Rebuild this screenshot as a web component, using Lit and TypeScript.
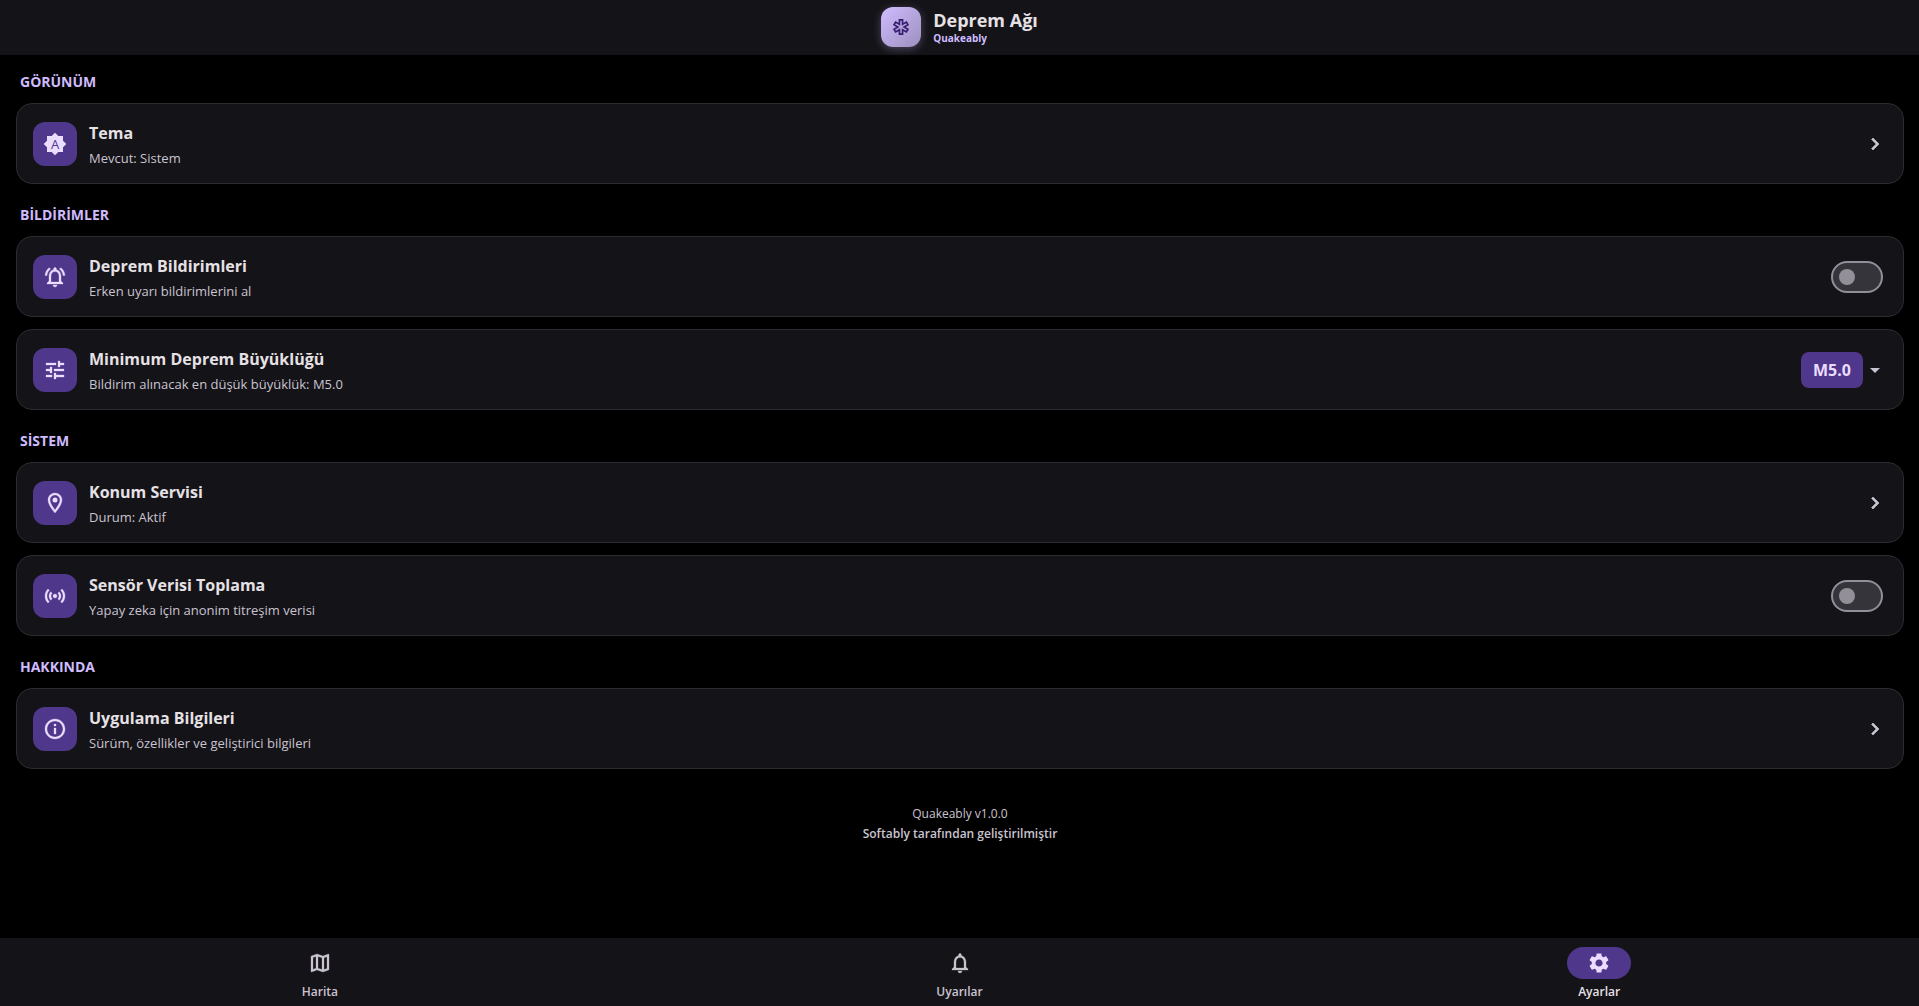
import { LitElement, html, svg, css, nothing, type SVGTemplateResult } from "lit";
import { customElement, property } from "lit/decorators.js";

const icons: Record<string, SVGTemplateResult> = {
  brightness: svg`
    <path d="M20 8.69V4h-4.69L12 .69 8.69 4H4v4.69L.69 12 4 15.31V20h4.69L12 23.31 15.31 20H20v-4.69L23.31 12z"/>
    <text class="letter" x="12" y="17" text-anchor="middle">A</text>`,
  alarm: svg`<path class="bold" d="M12 22c1.1 0 2-.9 2-2h-4c0 1.1.9 2 2 2zm6-6v-5c0-3.07-1.63-5.64-4.5-6.32V4c0-.83-.67-1.5-1.5-1.5s-1.5.67-1.5 1.5v.68C7.64 5.36 6 7.92 6 11v5l-2 2v1h16v-1l-2-2zm-2 1H8v-6c0-2.48 1.51-4.5 4-4.5s4 2.02 4 4.5v6zM7.58 4.08L6.15 2.65C3.75 4.48 2.17 7.3 2.03 10.5h2c.15-2.65 1.51-4.97 3.55-6.42zm12.39 6.42h2c-.15-3.2-1.73-6.02-4.12-7.85l-1.42 1.43c2.02 1.45 3.39 3.77 3.54 6.42z"/>`,
  tune: svg`<path class="bold" d="M3 17v2h6v-2H3zM3 5v2h10V5H3zm10 16v-2h8v-2h-8v-2h-2v6h2zM7 9v2H3v2h4v2h2V9H7zm14 4v-2H11v2h10zm-6-4h2V7h4V5h-4V3h-2v6z"/>`,
  place: svg`<path class="bold" d="M12 2C8.13 2 5 5.13 5 9c0 5.25 7 13 7 13s7-7.75 7-13c0-3.87-3.13-7-7-7zM7 9c0-2.76 2.24-5 5-5s5 2.24 5 5c0 2.88-2.88 7.19-5 9.88C9.92 16.21 7 11.85 7 9z"/><circle cx="12" cy="9" r="2.5"/>`,
  sensors: svg`<path class="bold" d="M7.76 16.24C6.67 15.16 6 13.66 6 12s.67-3.16 1.76-4.24l1.42 1.42C8.45 9.9 8 10.9 8 12c0 1.1.45 2.1 1.17 2.83l-1.41 1.41zm8.48 0C17.33 15.16 18 13.66 18 12s-.67-3.16-1.76-4.24l-1.42 1.42C15.55 9.9 16 10.9 16 12c0 1.1-.45 2.1-1.17 2.83l1.41 1.41zM12 10c-1.1 0-2 .9-2 2s.9 2 2 2 2-.9 2-2-.9-2-2-2zm8 2c0 2.21-.9 4.21-2.35 5.65l1.42 1.42C20.88 17.26 22 14.76 22 12s-1.12-5.26-2.93-7.07l-1.42 1.42C19.1 7.79 20 9.79 20 12zM6.35 6.35L4.93 4.93C3.12 6.74 2 9.24 2 12s1.12 5.26 2.93 7.07l1.42-1.42C4.9 16.21 4 14.21 4 12s.9-4.21 2.35-5.65z"/>`,
  info: svg`<path class="bold" d="M11 7h2v2h-2zm0 4h2v6h-2zm1-9C6.48 2 2 6.48 2 12s4.48 10 10 10 10-4.48 10-10S17.52 2 12 2zm0 18c-4.41 0-8-3.59-8-8s3.59-8 8-8 8 3.59 8 8-3.59 8-8 8z"/>`,
  chevron: svg`<path class="bolder" d="M10 6L8.59 7.41 13.17 12l-4.58 4.59L10 18l6-6z"/>`,
  drop: svg`<path d="M7 10l5 5 5-5z"/>`,
  map: svg`<path class="bold" d="M20.5 3l-.16.03L15 5.1 9 3 3.36 4.9c-.21.07-.36.25-.36.48V20.5c0 .28.22.5.5.5l.16-.03L9 18.9l6 2.1 5.64-1.9c.21-.07.36-.25.36-.48V3.5c0-.28-.22-.5-.5-.5zM10 5.47l4 1.4v11.66l-4-1.4V5.47zm-5 .99l3-1.01v11.7l-3 1.16V6.46zm14 11.08l-3 1.01V6.86l3-1.16v11.84z"/>`,
  bell: svg`<path class="bold" d="M12 22c1.1 0 2-.9 2-2h-4c0 1.1.9 2 2 2zm6-6v-5c0-3.07-1.63-5.64-4.5-6.32V4c0-.83-.67-1.5-1.5-1.5s-1.5.67-1.5 1.5v.68C7.64 5.36 6 7.92 6 11v5l-2 2v1h16v-1l-2-2zm-2 1H8v-6c0-2.48 1.51-4.5 4-4.5s4 2.02 4 4.5v6z"/>`,
  gear: svg`<path d="M19.14 12.94c.04-.3.06-.61.06-.94 0-.32-.02-.64-.07-.94l2.03-1.58c.18-.14.23-.41.12-.61l-1.92-3.32c-.12-.22-.37-.29-.59-.22l-2.39.96c-.5-.38-1.03-.7-1.62-.94l-.36-2.54c-.04-.24-.24-.41-.48-.41h-3.84c-.24 0-.43.17-.47.41l-.36 2.54c-.59.24-1.13.57-1.62.94l-2.39-.96c-.22-.08-.47 0-.59.22L2.74 8.87c-.12.21-.08.47.12.61l2.03 1.58c-.05.3-.09.63-.09.94s.02.64.07.94l-2.03 1.58c-.18.14-.23.41-.12.61l1.92 3.32c.12.22.37.29.59.22l2.39-.96c.5.38 1.03.7 1.62.94l.36 2.54c.05.24.24.41.48.41h3.84c.24 0 .44-.17.47-.41l.36-2.54c.59-.24 1.13-.56 1.62-.94l2.39.96c.22.08.47 0 .59-.22l1.92-3.32c.12-.22.07-.47-.12-.61l-2.01-1.58zM12 15.6c-1.98 0-3.6-1.62-3.6-3.6s1.62-3.6 3.6-3.6 3.6 1.62 3.6 3.6-1.62 3.6-3.6 3.6z"/>`,
  star: svg`<path class="outline" d="M10.3 4.2h3.4v4.86l4.2-2.43 1.7 2.94L15.4 12l4.2 2.43-1.7 2.94-4.2-2.43v4.86h-3.4v-4.86l-4.2 2.43-1.7-2.94L8.6 12 4.4 9.57l1.7-2.94 4.2 2.43z"/>`,
};

@customElement("app-icon")
export class AppIcon extends LitElement {
  @property() name = "";

  static styles = css`
    :host { display: block; width: 24px; height: 24px; flex: none; }
    svg { display: block; width: 100%; height: 100%; fill: currentColor; }
    .letter { font: 400 13px "Open Sans", "Noto Sans", sans-serif; fill: #4f378b; }
    .outline { fill: none; stroke: currentColor; stroke-width: 1.8; }
    .bold { stroke: currentColor; stroke-width: 0.3; }
    .bolder { stroke: currentColor; stroke-width: 0.7; }
  `;

  render() {
    return html`<svg viewBox="0 0 24 24" aria-hidden="true">${icons[this.name] ?? nothing}</svg>`;
  }
}

interface Row {
  id: string;
  icon: string;
  title: string;
  sub: string;
  kind: "link" | "switch" | "select";
}

const sections: { label: string; rows: Row[] }[] = [
  {
    label: "GÖRÜNÜM",
    rows: [{ id: "theme", icon: "brightness", title: "Tema", sub: "Mevcut: Sistem", kind: "link" }],
  },
  {
    label: "BİLDİRİMLER",
    rows: [
      { id: "alerts", icon: "alarm", title: "Deprem Bildirimleri", sub: "Erken uyarı bildirimlerini al", kind: "switch" },
      { id: "magnitude", icon: "tune", title: "Minimum Deprem Büyüklüğü", sub: "Bildirim alınacak en düşük büyüklük: M5.0", kind: "select" },
    ],
  },
  {
    label: "SİSTEM",
    rows: [
      { id: "location", icon: "place", title: "Konum Servisi", sub: "Durum: Aktif", kind: "link" },
      { id: "sensor", icon: "sensors", title: "Sensör Verisi Toplama", sub: "Yapay zeka için anonim titreşim verisi", kind: "switch" },
    ],
  },
  {
    label: "HAKKINDA",
    rows: [{ id: "about", icon: "info", title: "Uygulama Bilgileri", sub: "Sürüm, özellikler ve geliştirici bilgileri", kind: "link" }],
  },
];

const tabs = [
  { icon: "map", label: "Harita", active: false },
  { icon: "bell", label: "Uyarılar", active: false },
  { icon: "gear", label: "Ayarlar", active: true },
];

@customElement("app-root")
export class AppRoot extends LitElement {
  static styles = css`
    :host {
      display: flex;
      flex-direction: column;
      min-height: 100vh;
      background: #000;
      color: #e6e1e5;
      font-family: "Open Sans", "Noto Sans", sans-serif;
    }
    * { box-sizing: border-box; }
    h1, h2, p { margin: 0; }

    .header {
      display: flex;
      justify-content: center;
      align-items: center;
      gap: 12px;
      padding: 7px 16px 8px;
      background: #141318;
    }
    .logo {
      display: grid;
      place-items: center;
      width: 40px;
      height: 40px;
      border-radius: 12px;
      background: linear-gradient(135deg, #cfbcff, #9c8fbd);
      box-shadow: 0 2px 8px rgba(207, 188, 255, 0.3);
      color: #381e72;
    }
    .logo app-icon { width: 22px; height: 22px; }
    .brand { font-size: 18px; line-height: 22px; font-weight: 700; }
    .tagline { font-size: 10px; line-height: 14px; font-weight: 700; color: #cfbcff; }

    .content { flex: 1; padding: 0 15px 0 16px; }
    .section { display: flex; flex-direction: column; gap: 12px; }
    .label {
      padding: 17px 4px 0;
      font-size: 14px;
      line-height: 19px;
      font-weight: 700;
      color: #cfbcff;
    }
    .section + .section .label { padding-top: 21px; }

    .card {
      display: flex;
      align-items: center;
      gap: 12px;
      width: 100%;
      min-height: 81px;
      padding: 15px 16px;
      border: 1px solid #2c2b2f;
      border-radius: 16px;
      background: #141318;
      color: inherit;
      font: inherit;
      text-align: left;
    }
    .badge {
      display: grid;
      place-items: center;
      width: 44px;
      height: 44px;
      border-radius: 12px;
      background: #4f378b;
      color: #eaddff;
    }
    .text { flex: 1; display: flex; flex-direction: column; gap: 4px; padding-top: 2px; }
    .title { font-size: 16px; line-height: 22px; font-weight: 700; }
    .sub { font-size: 13px; line-height: 20px; color: #cac4d0; }
    .muted { color: #cac4d0; }

    .switch {
      appearance: none;
      display: flex;
      align-items: center;
      width: 52px;
      height: 32px;
      margin: 0 4px;
      padding: 0 6px;
      border: 2px solid #938f99;
      border-radius: 16px;
      background: #36343b;
    }
    .switch::before {
      content: "";
      width: 16px;
      height: 16px;
      border-radius: 50%;
      background: #938f99;
    }
    .switch:checked { justify-content: flex-end; background: #4f378b; }

    .picker { display: flex; align-items: center; color: #cac4d0; }
    .select {
      appearance: none;
      height: 36px;
      padding: 0 12px;
      border: 0;
      border-radius: 8px;
      background: #4f378b;
      color: #eaddff;
      font: 700 16px/24px "Open Sans", "Noto Sans", sans-serif;
    }

    .footer {
      padding: 35px 0;
      text-align: center;
      font-size: 12px;
      line-height: 20px;
      color: #cac4d0;
    }
    .strong { font-weight: 600; }

    .nav { display: flex; height: 68px; background: #141318; }
    .tab {
      flex: 1;
      display: flex;
      flex-direction: column;
      align-items: center;
      padding-top: 9px;
      gap: 5px;
      color: #cac4d0;
      font-size: 12px;
      line-height: 16px;
      font-weight: 600;
      text-decoration: none;
    }
    .pill {
      display: grid;
      place-items: center;
      width: 64px;
      height: 32px;
      border-radius: 16px;
    }
    .active { color: #e6e1e5; }
    .active .pill { background: #4f378b; color: #eaddff; }
  `;

  private body(row: Row) {
    return html`
      <span class="badge"><app-icon name=${row.icon}></app-icon></span>
      <span class="text">
        <span class="title">${row.title}</span>
        <span class="sub">${row.sub}</span>
      </span>`;
  }

  private card(row: Row) {
    if (row.kind === "link") {
      return html`<button class="card" type="button">
        ${this.body(row)}<app-icon class="muted" name="chevron"></app-icon>
      </button>`;
    }
    if (row.kind === "switch") {
      return html`<label class="card" for=${row.id}>
        ${this.body(row)}<input class="switch" type="checkbox" role="switch" id=${row.id} />
      </label>`;
    }
    return html`<label class="card" for=${row.id}>
      ${this.body(row)}
      <span class="picker">
        <select class="select" id=${row.id}>
          <option>M5.0</option>
        </select>
        <app-icon name="drop"></app-icon>
      </span>
    </label>`;
  }

  render() {
    return html`
      <header class="header">
        <span class="logo"><app-icon name="star"></app-icon></span>
        <div>
          <h1 class="brand">Deprem Ağı</h1>
          <p class="tagline">Quakeably</p>
        </div>
      </header>
      <main class="content">
        ${sections.map(
          (s) => html`<section class="section">
            <h2 class="label">${s.label}</h2>
            ${s.rows.map((r) => this.card(r))}
          </section>`
        )}
        <footer class="footer">
          <p>Quakeably v1.0.0</p>
          <p class="strong">Softably tarafından geliştirilmiştir</p>
        </footer>
      </main>
      <nav class="nav">
        ${tabs.map(
          (t) => html`<a class="tab ${t.active ? "active" : ""}" href="#" aria-current=${t.active ? "page" : nothing}>
            <span class="pill"><app-icon name=${t.icon}></app-icon></span>
            ${t.label}
          </a>`
        )}
      </nav>
    `;
  }
}
